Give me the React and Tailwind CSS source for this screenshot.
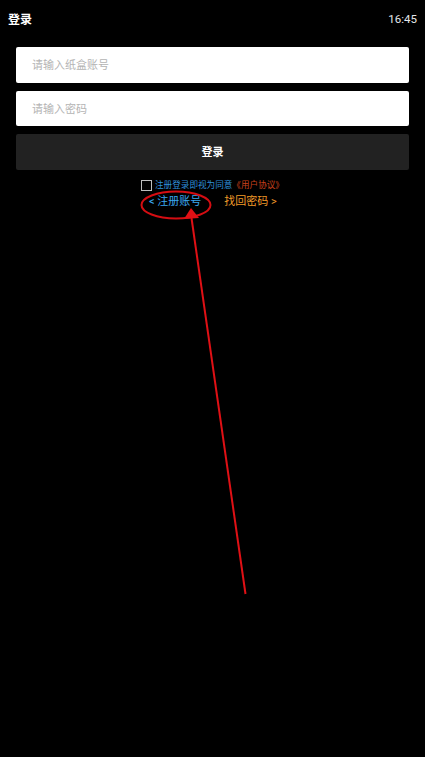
import React from "react";

const font = {
  cjk: "font-['Roboto','Noto_Sans_CJK_SC',sans-serif]",
};

const TextField = ({ placeholder }) => {
  return (
    <input
      className="w-full h-[35.5px] bg-white rounded-[2px] pl-4 pr-4 pt-[2px] text-[11px] text-gray-800 placeholder:text-[#b4b4b4] outline-none"
      placeholder={placeholder}
    />
  );
};

export default function App() {
  return (
    <div
      className={`relative w-[425px] h-[757px] overflow-hidden bg-black ${font.cjk}`}
    >
      <div className="h-[47px] px-2 pb-2 flex items-center justify-between text-white">
        <span className="text-[12px] font-bold">登录</span>
        <span className="text-[11.5px] text-gray-200">16:45</span>
      </div>

      <div className="px-4 flex flex-col gap-2">
        <TextField placeholder="请输入纸盒账号" />
        <TextField placeholder="请输入密码" />
        <button className="h-9 pt-[2px] bg-[#222222] rounded-[2px] text-white text-[11px] font-bold">
          登录
        </button>
      </div>

      <div className="mt-[9px] flex items-center pl-[141px] text-[8.6px] leading-3">
        <span className="w-[11px] h-[11px] border border-[#bdbdbd] mr-[3px]" />
        <span className="text-[#2f8fd8]">注册登录即视为同意</span>
        <span className="text-[#c8401c]">《用户协议》</span>
      </div>

      <div className="mt-[2px] flex text-[11px] leading-[18px]">
        <span className="ml-[149px] text-[#3ba7f0]">&lt; 注册账号</span>
        <span className="ml-[23px] text-[#f09a28]">找回密码 &gt;</span>
      </div>

      {/* red annotation drawn on top of the screenshot */}
      <svg
        className="absolute inset-0 pointer-events-none"
        width="425"
        height="757"
        viewBox="0 0 425 757"
      >
        <ellipse
          cx="176"
          cy="205"
          rx="34.5"
          ry="13.5"
          fill="none"
          stroke="#d40d12"
          strokeWidth="2"
        />
        <line
          x1="245.5"
          y1="594"
          x2="191.5"
          y2="218"
          stroke="#e01015"
          strokeWidth="2"
        />
        <polygon points="191,208 184,219 199,218" fill="#e01015" />
      </svg>
    </div>
  );
}
